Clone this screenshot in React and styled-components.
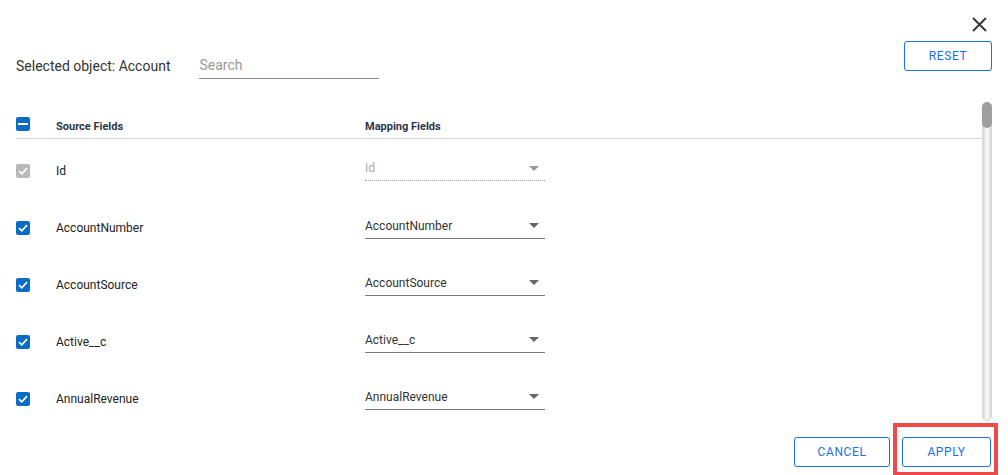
import React from 'react';
import styled, { createGlobalStyle } from 'styled-components';

const GlobalStyle = createGlobalStyle`
	html, body {
		margin: 0;
		padding: 0;
		background: #fff;
	}
	body {
		font-family: Roboto, "Liberation Sans", Arial, sans-serif;
		color: #333;
	}
`;

const Dialog = styled.div`
	width: 1008px;
	height: 475px;
	display: flex;
	flex-direction: column;
	overflow: hidden;
	background: #fff;
`;

const TopBar = styled.div`
	display: flex;
	justify-content: flex-end;
	height: 41px;
	padding: 0 20px 0 0;
	box-sizing: border-box;
`;

const CloseButton = styled.button`
	border: 0;
	background: none;
	padding: 0;
	margin-top: 16px;
	width: 16px;
	height: 16px;
	cursor: pointer;
	svg {
		display: block;
	}
`;

const Toolbar = styled.div`
	display: flex;
	justify-content: space-between;
	align-items: flex-start;
	padding: 0 16px;
	height: 61px;
`;

const FilterGroup = styled.div`
	display: flex;
	align-items: flex-start;
	gap: 29px;
	padding-top: 16px;
`;

const ObjectLabel = styled.span`
	font-size: 14px;
	line-height: 16px;
	color: #333;
	margin-top: 1px;
`;

const SearchInput = styled.input`
	width: 180px;
	border: 0;
	border-bottom: 1px solid #888;
	padding: 0 0 5px 0;
	font-family: inherit;
	font-size: 14px;
	line-height: 16px;
	color: #333;
	outline: none;
	background: transparent;
	&::placeholder {
		color: #999;
	}
`;

const OutlineButton = styled.button`
	box-sizing: border-box;
	width: ${(p) => p.width || 88}px;
	height: 30px;
	border: 1px solid #1a6fe8;
	border-radius: 3px;
	background: #fff;
	color: #1a6fe8;
	font-family: inherit;
	font-size: 12px;
	letter-spacing: 0.6px;
	cursor: pointer;
	padding: 0;
`;

const ListArea = styled.div`
	display: flex;
	margin: 0 16px;
	height: 319px;
`;

const List = styled.div`
	flex: 1;
	overflow: hidden;
`;

const ScrollTrack = styled.div`
	width: 10px;
	border-radius: 5px;
	box-sizing: border-box;
	border: 1px solid #dcd8d8;
	background: linear-gradient(to right, #d6d2d2, #f6f6f6 35%, #f6f6f6 65%, #d6d2d2);
	display: flex;
	flex-direction: column;
`;

const ScrollThumb = styled.div`
	height: 26px;
	margin: -1px;
	border-radius: 5px;
	background: #a09e9e;
`;

const Grid = styled.div`
	display: grid;
	grid-template-columns: 40px 309px 180px 1fr;
	align-items: center;
`;

const HeaderRow = styled(Grid)`
	align-items: start;
	padding: 15px 0 4px;
	border-bottom: 1px solid #d3d3dc;
`;

const HeaderCell = styled.span`
	font-size: 11px;
	font-weight: 700;
	color: #2d3648;
	line-height: 14px;
	margin-top: 3px;
`;

const Rows = styled.div`
	padding-top: 3px;
`;

const Row = styled(Grid)`
	height: 57px;
`;

const FieldName = styled.span`
	font-size: 12px;
	color: #222;
`;

const Box = styled.span`
	width: 14px;
	height: 14px;
	border-radius: 2px;
	background: ${(p) => (p.disabled ? '#b9b9b9' : '#0b6cc4')};
	display: flex;
	align-items: center;
	justify-content: center;
`;

const Select = styled.div`
	display: flex;
	align-items: center;
	justify-content: space-between;
	height: 24px;
	padding: 0 6px 0 0;
	margin-top: ${(p) => (p.disabled ? '-4px' : '-3px')};
	border-bottom: ${(p) => (p.disabled ? '1px dotted #9a9a9a' : '1px solid #7a7a7a')};
	font-size: 12px;
	color: ${(p) => (p.disabled ? '#aaa' : '#333')};
`;

const Caret = styled.span`
	width: 0;
	height: 0;
	border-left: 5px solid transparent;
	border-right: 5px solid transparent;
	border-top: 5px solid ${(p) => (p.disabled ? '#999' : '#666')};
`;

const Footer = styled.div`
	display: flex;
	justify-content: flex-end;
	gap: 12px;
	padding: 16px 17px 0 0;
`;

const Highlight = styled.div`
	position: relative;
	&::after {
		content: '';
		position: absolute;
		top: -14px;
		left: -9px;
		right: -7px;
		bottom: -9px;
		border: 4px solid #f34848;
		pointer-events: none;
	}
`;

const fields = ['Id', 'AccountNumber', 'AccountSource', 'Active__c', 'AnnualRevenue'];

const Check = ({ disabled }) => (
	<Box disabled={disabled}>
		<svg width="10" height="8" viewBox="0 0 10 8">
			<path d="M1 4.2 L3.8 6.8 L9 1.2" fill="none" stroke="#fff" strokeWidth="1.7" />
		</svg>
	</Box>
);

const Partial = () => (
	<Box>
		<svg width="10" height="2" viewBox="0 0 10 2">
			<rect width="10" height="2" fill="#fff" />
		</svg>
	</Box>
);

const App = () => (
	<Dialog>
		<GlobalStyle />
		<TopBar>
			<CloseButton aria-label="Close">
				<svg width="15" height="15" viewBox="0 0 15 15">
					<path d="M1 1 L14 14 M14 1 L1 14" stroke="#333" strokeWidth="1.8" />
				</svg>
			</CloseButton>
		</TopBar>
		<Toolbar>
			<FilterGroup>
				<ObjectLabel>Selected object: Account</ObjectLabel>
				<SearchInput placeholder="Search" />
			</FilterGroup>
			<OutlineButton width={88}>RESET</OutlineButton>
		</Toolbar>
		<ListArea>
			<List>
				<HeaderRow>
					<Partial />
					<HeaderCell>Source Fields</HeaderCell>
					<HeaderCell>Mapping Fields</HeaderCell>
				</HeaderRow>
				<Rows>
					{fields.map((f, i) => (
						<Row key={f}>
							<Check disabled={i === 0} />
							<FieldName>{f}</FieldName>
							<Select disabled={i === 0}>
								{f}
								<Caret disabled={i === 0} />
							</Select>
						</Row>
					))}
				</Rows>
			</List>
			<ScrollTrack>
				<ScrollThumb />
			</ScrollTrack>
		</ListArea>
		<Footer>
			<OutlineButton width={96}>CANCEL</OutlineButton>
			<Highlight>
				<OutlineButton width={89}>APPLY</OutlineButton>
			</Highlight>
		</Footer>
	</Dialog>
);

export default App;
